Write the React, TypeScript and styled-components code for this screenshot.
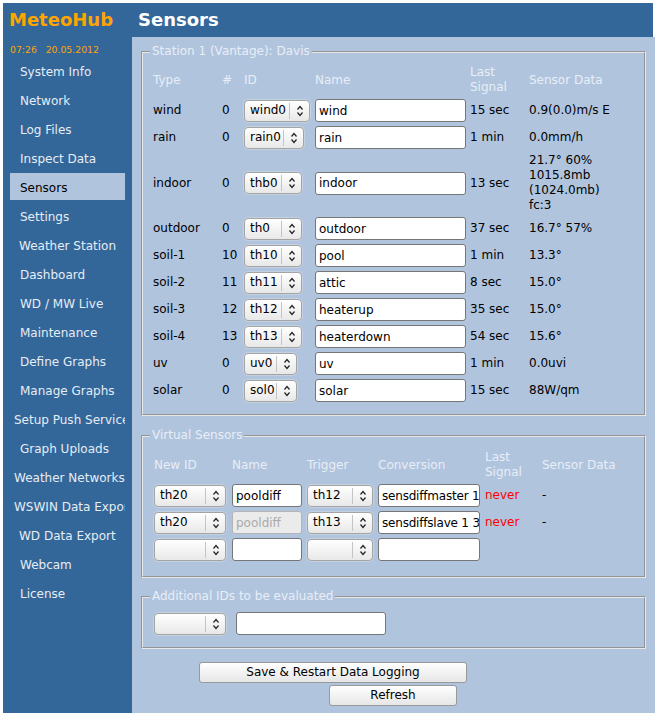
import styled, { createGlobalStyle } from 'styled-components';

const navItems = [
  { label: 'System Info', inset: 10 },
  { label: 'Network', inset: 10 },
  { label: 'Log Files', inset: 10 },
  { label: 'Inspect Data', inset: 10 },
  { label: 'Sensors', inset: 10, active: true },
  { label: 'Settings', inset: 10 },
  { label: 'Weather Station', inset: 9 },
  { label: 'Dashboard', inset: 10 },
  { label: 'WD / MW Live', inset: 10 },
  { label: 'Maintenance', inset: 10 },
  { label: 'Define Graphs', inset: 10 },
  { label: 'Manage Graphs', inset: 10 },
  { label: 'Setup Push Service', inset: 4 },
  { label: 'Graph Uploads', inset: 10 },
  { label: 'Weather Networks', inset: 4 },
  { label: 'WSWIN Data Export', inset: 4 },
  { label: 'WD Data Export', inset: 9 },
  { label: 'Webcam', inset: 10 },
  { label: 'License', inset: 10 },
];

const sensors = [
  { type: 'wind', num: '0', id: 'wind0', width: 66, name: 'wind', signal: '15 sec', data: ['0.9(0.0)m/s E'] },
  { type: 'rain', num: '0', id: 'rain0', width: 60, name: 'rain', signal: '1 min', data: ['0.0mm/h'] },
  { type: 'indoor', num: '0', id: 'thb0', width: 58, name: 'indoor', signal: '13 sec', data: ['21.7° 60%', '1015.8mb', '(1024.0mb)', 'fc:3'] },
  { type: 'outdoor', num: '0', id: 'th0', width: 58, name: 'outdoor', signal: '37 sec', data: ['16.7° 57%'] },
  { type: 'soil-1', num: '10', id: 'th10', width: 58, name: 'pool', signal: '1 min', data: ['13.3°'] },
  { type: 'soil-2', num: '11', id: 'th11', width: 58, name: 'attic', signal: '8 sec', data: ['15.0°'] },
  { type: 'soil-3', num: '12', id: 'th12', width: 58, name: 'heaterup', signal: '35 sec', data: ['15.0°'] },
  { type: 'soil-4', num: '13', id: 'th13', width: 58, name: 'heaterdown', signal: '54 sec', data: ['15.6°'] },
  { type: 'uv', num: '0', id: 'uv0', width: 53, name: 'uv', signal: '1 min', data: ['0.0uvi'] },
  { type: 'solar', num: '0', id: 'sol0', width: 53, name: 'solar', signal: '15 sec', data: ['88W/qm'] },
];

const virtualSensors = [
  { id: 'th20', name: 'pooldiff', locked: false, trigger: 'th12', conversion: 'sensdiffmaster 1 3', signal: 'never', data: '-' },
  { id: 'th20', name: 'pooldiff', locked: true, trigger: 'th13', conversion: 'sensdiffslave 1 3', signal: 'never', data: '-' },
  { id: '', name: '', locked: false, trigger: '', conversion: '', signal: '', data: '' },
];

const Chevrons = () => (
  <svg width="8" height="12" viewBox="0 0 8 12" fill="none" stroke="#222" strokeWidth="1.2">
    <path d="M1.5 4.5 L4 1.5 L6.5 4.5" />
    <path d="M1.5 7.5 L4 10.5 L6.5 7.5" />
  </svg>
);

const Select = ({ value, width }: { value: string; width: number }) => (
  <SelectBox $width={width}>
    <SelectValue>{value}</SelectValue>
    <SelectArrow>
      <Chevrons />
    </SelectArrow>
  </SelectBox>
);

const App = () => {
  return (
    <Page>
      <GlobalStyle />
      <Header>
        <Logo>MeteoHub</Logo>
        <PageTitle>Sensors</PageTitle>
      </Header>
      <Body>
        <Sidebar>
          <Clock>07:26&nbsp;&nbsp; 20.05.2012</Clock>
          {navItems.map((item) => (
            <NavItem key={item.label} $inset={item.inset} $active={item.active}>
              {item.label}
            </NavItem>
          ))}
        </Sidebar>
        <Content>
          <StationGroup>
            <Legend>Station 1 (Vantage): Davis</Legend>
            <StationTable>
              <thead>
                <tr>
                  <Heading>Type</Heading>
                  <Heading>#</Heading>
                  <Heading>ID</Heading>
                  <Heading>Name</Heading>
                  <Heading>Last<br />Signal</Heading>
                  <Heading>Sensor Data</Heading>
                </tr>
              </thead>
              <tbody>
                {sensors.map((s) => (
                  <tr key={s.type}>
                    <Cell>{s.type}</Cell>
                    <Cell>{s.num}</Cell>
                    <Cell><Select value={s.id} width={s.width} /></Cell>
                    <Cell><TextInput $width={151} defaultValue={s.name} /></Cell>
                    <Cell>{s.signal}</Cell>
                    <Cell>
                      {s.data.map((line) => (
                        <div key={line}>{line}</div>
                      ))}
                    </Cell>
                  </tr>
                ))}
              </tbody>
            </StationTable>
          </StationGroup>

          <VirtualGroup>
            <Legend>Virtual Sensors</Legend>
            <VirtualTable>
              <thead>
                <tr>
                  <Heading>New ID</Heading>
                  <Heading>Name</Heading>
                  <Heading>Trigger</Heading>
                  <Heading>Conversion</Heading>
                  <Heading>Last<br />Signal</Heading>
                  <Heading>Sensor Data</Heading>
                </tr>
              </thead>
              <tbody>
                {virtualSensors.map((v, i) => (
                  <tr key={i}>
                    <Cell><Select value={v.id} width={72} /></Cell>
                    <Cell><TextInput $width={70} defaultValue={v.name} disabled={v.locked} /></Cell>
                    <Cell><Select value={v.trigger} width={66} /></Cell>
                    <Cell><ConversionInput $width={102} defaultValue={v.conversion} /></Cell>
                    <Cell><Never>{v.signal}</Never></Cell>
                    <Cell>{v.data}</Cell>
                  </tr>
                ))}
              </tbody>
            </VirtualTable>
          </VirtualGroup>

          <ExtraGroup>
            <Legend>Additional IDs to be evaluated</Legend>
            <ExtraRow>
              <Select value="" width={72} />
              <TextInput $width={150} defaultValue="" />
            </ExtraRow>
          </ExtraGroup>

          <Actions>
            <SaveButton>Save &amp; Restart Data Logging</SaveButton>
            <RefreshButton>Refresh</RefreshButton>
          </Actions>
        </Content>
      </Body>
    </Page>
  );
};

const GlobalStyle = createGlobalStyle`
  html, body {
    margin: 0;
    background: #fff;
  }
  body {
    font-family: 'DejaVu Sans', sans-serif;
    font-size: 12px;
    line-height: 15px;
    color: #000;
  }
`;

const Page = styled.div`
  width: 650px;
  height: 710px;
  margin: 3px 0 0 3px;
  display: flex;
  flex-direction: column;
  background: #336699;
`;

const Header = styled.div`
  height: 34px;
  flex: none;
  display: flex;
  align-items: center;
  font-weight: bold;
  font-size: 18px;
  padding-bottom: 1px;
  box-sizing: border-box;
`;

const Logo = styled.div`
  width: 135px;
  padding-left: 6px;
  box-sizing: border-box;
  color: #ffa500;
`;

const PageTitle = styled.div`
  color: #fff;
`;

const Body = styled.div`
  flex: 1;
  display: flex;
  min-height: 0;
`;

const Sidebar = styled.div`
  width: 129px;
  flex: none;
  padding: 6px 7px 0;
  box-sizing: border-box;
  overflow: hidden;
`;

const Clock = styled.div`
  height: 12px;
  margin-bottom: 2px;
  color: #ffa500;
  font-size: 9.3px;
  line-height: 14px;
  white-space: nowrap;
`;

const NavItem = styled.div<{ $inset: number; $active?: boolean }>`
  width: 115px;
  height: 27px;
  margin-bottom: 2px;
  padding-left: ${(p) => p.$inset}px;
  box-sizing: border-box;
  line-height: 31px;
  white-space: nowrap;
  overflow: hidden;
  color: ${(p) => (p.$active ? '#000' : '#e6edf5')};
  background: ${(p) => (p.$active ? '#b0c4de' : 'transparent')};
`;

const Content = styled.div`
  flex: 1;
  background: #b0c4de;
  padding: 7px 9px 0;
  box-sizing: border-box;
`;

const Group = styled.fieldset`
  margin: 0 0 11px;
  padding: 4px 8px 10px 8px;
  border: 2px groove #e8e8e8;
  min-width: 0;
`;

const StationGroup = styled(Group)`
  margin-bottom: 12px;
`;

const VirtualGroup = styled(Group)`
  padding-top: 5px;
  padding-bottom: 13px;
`;

const ExtraGroup = styled(Group)`
  padding-top: 8px;
  padding-bottom: 12px;
`;

const Legend = styled.legend`
  padding: 0 2px;
  margin-left: -1px;
  color: #e8eef6;
`;

const StationTable = styled.table`
  table-layout: fixed;
  border-collapse: collapse;
  width: 484px;
  & th { box-sizing: border-box; }
  & th:nth-child(1) { width: 69px; }
  & th:nth-child(2) { width: 22px; }
  & th:nth-child(3) { width: 71px; }
  & th:nth-child(4) { width: 155px; }
  & th:nth-child(5) { width: 59px; }
`;

const VirtualTable = styled.table`
  table-layout: fixed;
  border-collapse: collapse;
  width: 484px;
  margin-left: 1px;
  & th { box-sizing: border-box; }
  & th:nth-child(1) { width: 78px; }
  & th:nth-child(2) { width: 75px; }
  & th:nth-child(3) { width: 71px; }
  & th:nth-child(4) { width: 107px; }
  & th:nth-child(5) { width: 57px; }
`;

const Heading = styled.th`
  padding: 2px;
  text-align: left;
  font-weight: normal;
  color: #e8eef6;
`;

const Cell = styled.td`
  padding: 2px;
  vertical-align: middle;
`;

const SelectBox = styled.div<{ $width: number }>`
  width: ${(p) => p.$width}px;
  height: 22px;
  display: flex;
  align-items: center;
  box-sizing: border-box;
  border: 1px solid #a4a4a4;
  border-radius: 4px;
  background: linear-gradient(#ffffff, #e8e8e8);
  box-shadow: 0 0 0 0.5px #d8dde4;
`;

const SelectValue = styled.span`
  flex: 1;
  padding-left: 5px;
  white-space: nowrap;
`;

const SelectArrow = styled.span`
  width: 19px;
  height: 16px;
  flex: none;
  display: flex;
  align-items: center;
  justify-content: center;
  border-left: 1px solid #c4c4c4;
`;

const TextInput = styled.input<{ $width: number }>`
  display: block;
  width: ${(p) => p.$width}px;
  height: 23px;
  box-sizing: border-box;
  padding: 0 0 0 3px;
  border: 1px solid #767676;
  border-radius: 3px;
  outline: none;
  background: #fff;
  color: #000;
  font: inherit;

  &:disabled {
    background: #ebebeb;
    color: #aaa;
    border-color: #b4b4b4;
  }
`;

const ConversionInput = styled(TextInput)`
  letter-spacing: -0.2px;
`;

const Never = styled.span`
  color: #f00;
`;

const ExtraRow = styled.div`
  display: flex;
  align-items: center;
  gap: 10px;
  padding: 0 3px;
`;

const Actions = styled.div`
  display: flex;
  flex-direction: column;
  align-items: flex-start;
  gap: 2px;
  margin-top: 13px;
`;

const ActionButton = styled.button`
  height: 21px;
  padding: 0;
  box-sizing: border-box;
  border: 1px solid #999;
  border-radius: 3px;
  background: linear-gradient(#ffffff, #e6e6e6);
  color: #000;
  font: inherit;
`;

const SaveButton = styled(ActionButton)`
  width: 268px;
  margin-left: 58px;
`;

const RefreshButton = styled(ActionButton)`
  width: 128px;
  margin-left: 188px;
`;

export default App;
